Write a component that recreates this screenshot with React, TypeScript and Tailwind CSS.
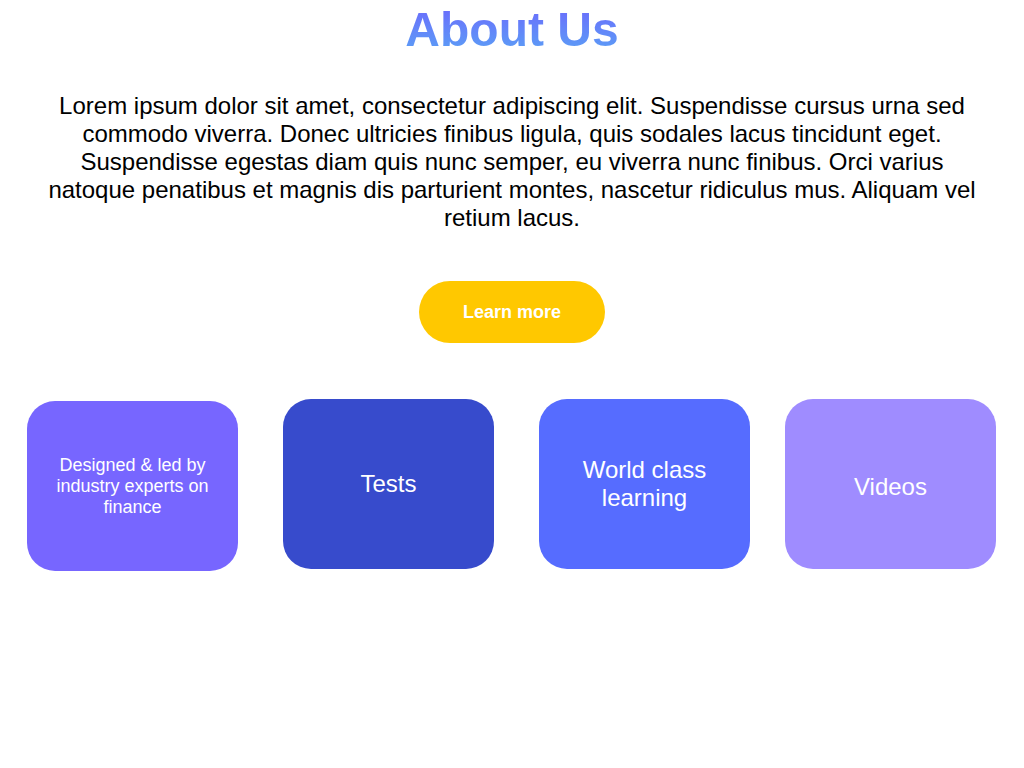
const cards = [
  { label: 'Designed & led by industry experts on finance', bg: 'bg-[#7766ff]', text: 'text-[18px] leading-[21px]', extra: 'ml-[27px] mt-[2px]' },
  { label: 'Tests', bg: 'bg-[#374bcc]', text: 'text-[24px] leading-[28px]', extra: 'ml-[45px]' },
  { label: 'World class learning', bg: 'bg-[#566cff]', text: 'text-[24px] leading-[28px]', extra: 'ml-[45px]' },
  { label: 'Videos', bg: 'bg-[#9f8cff]', text: 'text-[24px] leading-[28px] pt-[6px]', extra: 'ml-[35px]' },
];

export default function App() {
  return (
    <div className="min-h-[768px] w-full bg-white font-['Liberation_Sans',Arial,sans-serif]">
      {/* Heading */}
      <h1 className="pt-[2px] text-center text-[48px] font-bold leading-[55px]">
        <span className="bg-gradient-to-b from-[#6b66fc] to-[#58a2f5] bg-clip-text text-transparent">About Us</span>
      </h1>

      {/* Intro */}
      <p className="mx-auto mt-[35px] w-[934px] text-center text-[24px] leading-[28px] text-black">
        Lorem ipsum dolor sit amet, consectetur adipiscing elit. Suspendisse cursus urna sed commodo viverra. Donec
        ultricies finibus ligula, quis sodales lacus tincidunt eget. Suspendisse egestas diam quis nunc semper, eu
        viverra nunc finibus. Orci varius natoque penatibus et magnis dis parturient montes, nascetur ridiculus mus.
        Aliquam vel retium lacus.
      </p>

      <div className="mt-[49px] flex justify-center">
        <button className="h-[62px] w-[186px] rounded-full bg-[#ffc800] text-[18px] font-bold text-white">
          Learn more
        </button>
      </div>

      {/* Feature cards */}
      <div className="mt-[56px] flex items-start">
        {cards.map((c) => (
          <div
            key={c.label}
            className={`flex h-[170px] w-[211px] items-center justify-center rounded-[28px] px-[26px] text-center text-white ${c.bg} ${c.extra}`}
          >
            <span className={c.text}>{c.label}</span>
          </div>
        ))}
      </div>
    </div>
  );
}
